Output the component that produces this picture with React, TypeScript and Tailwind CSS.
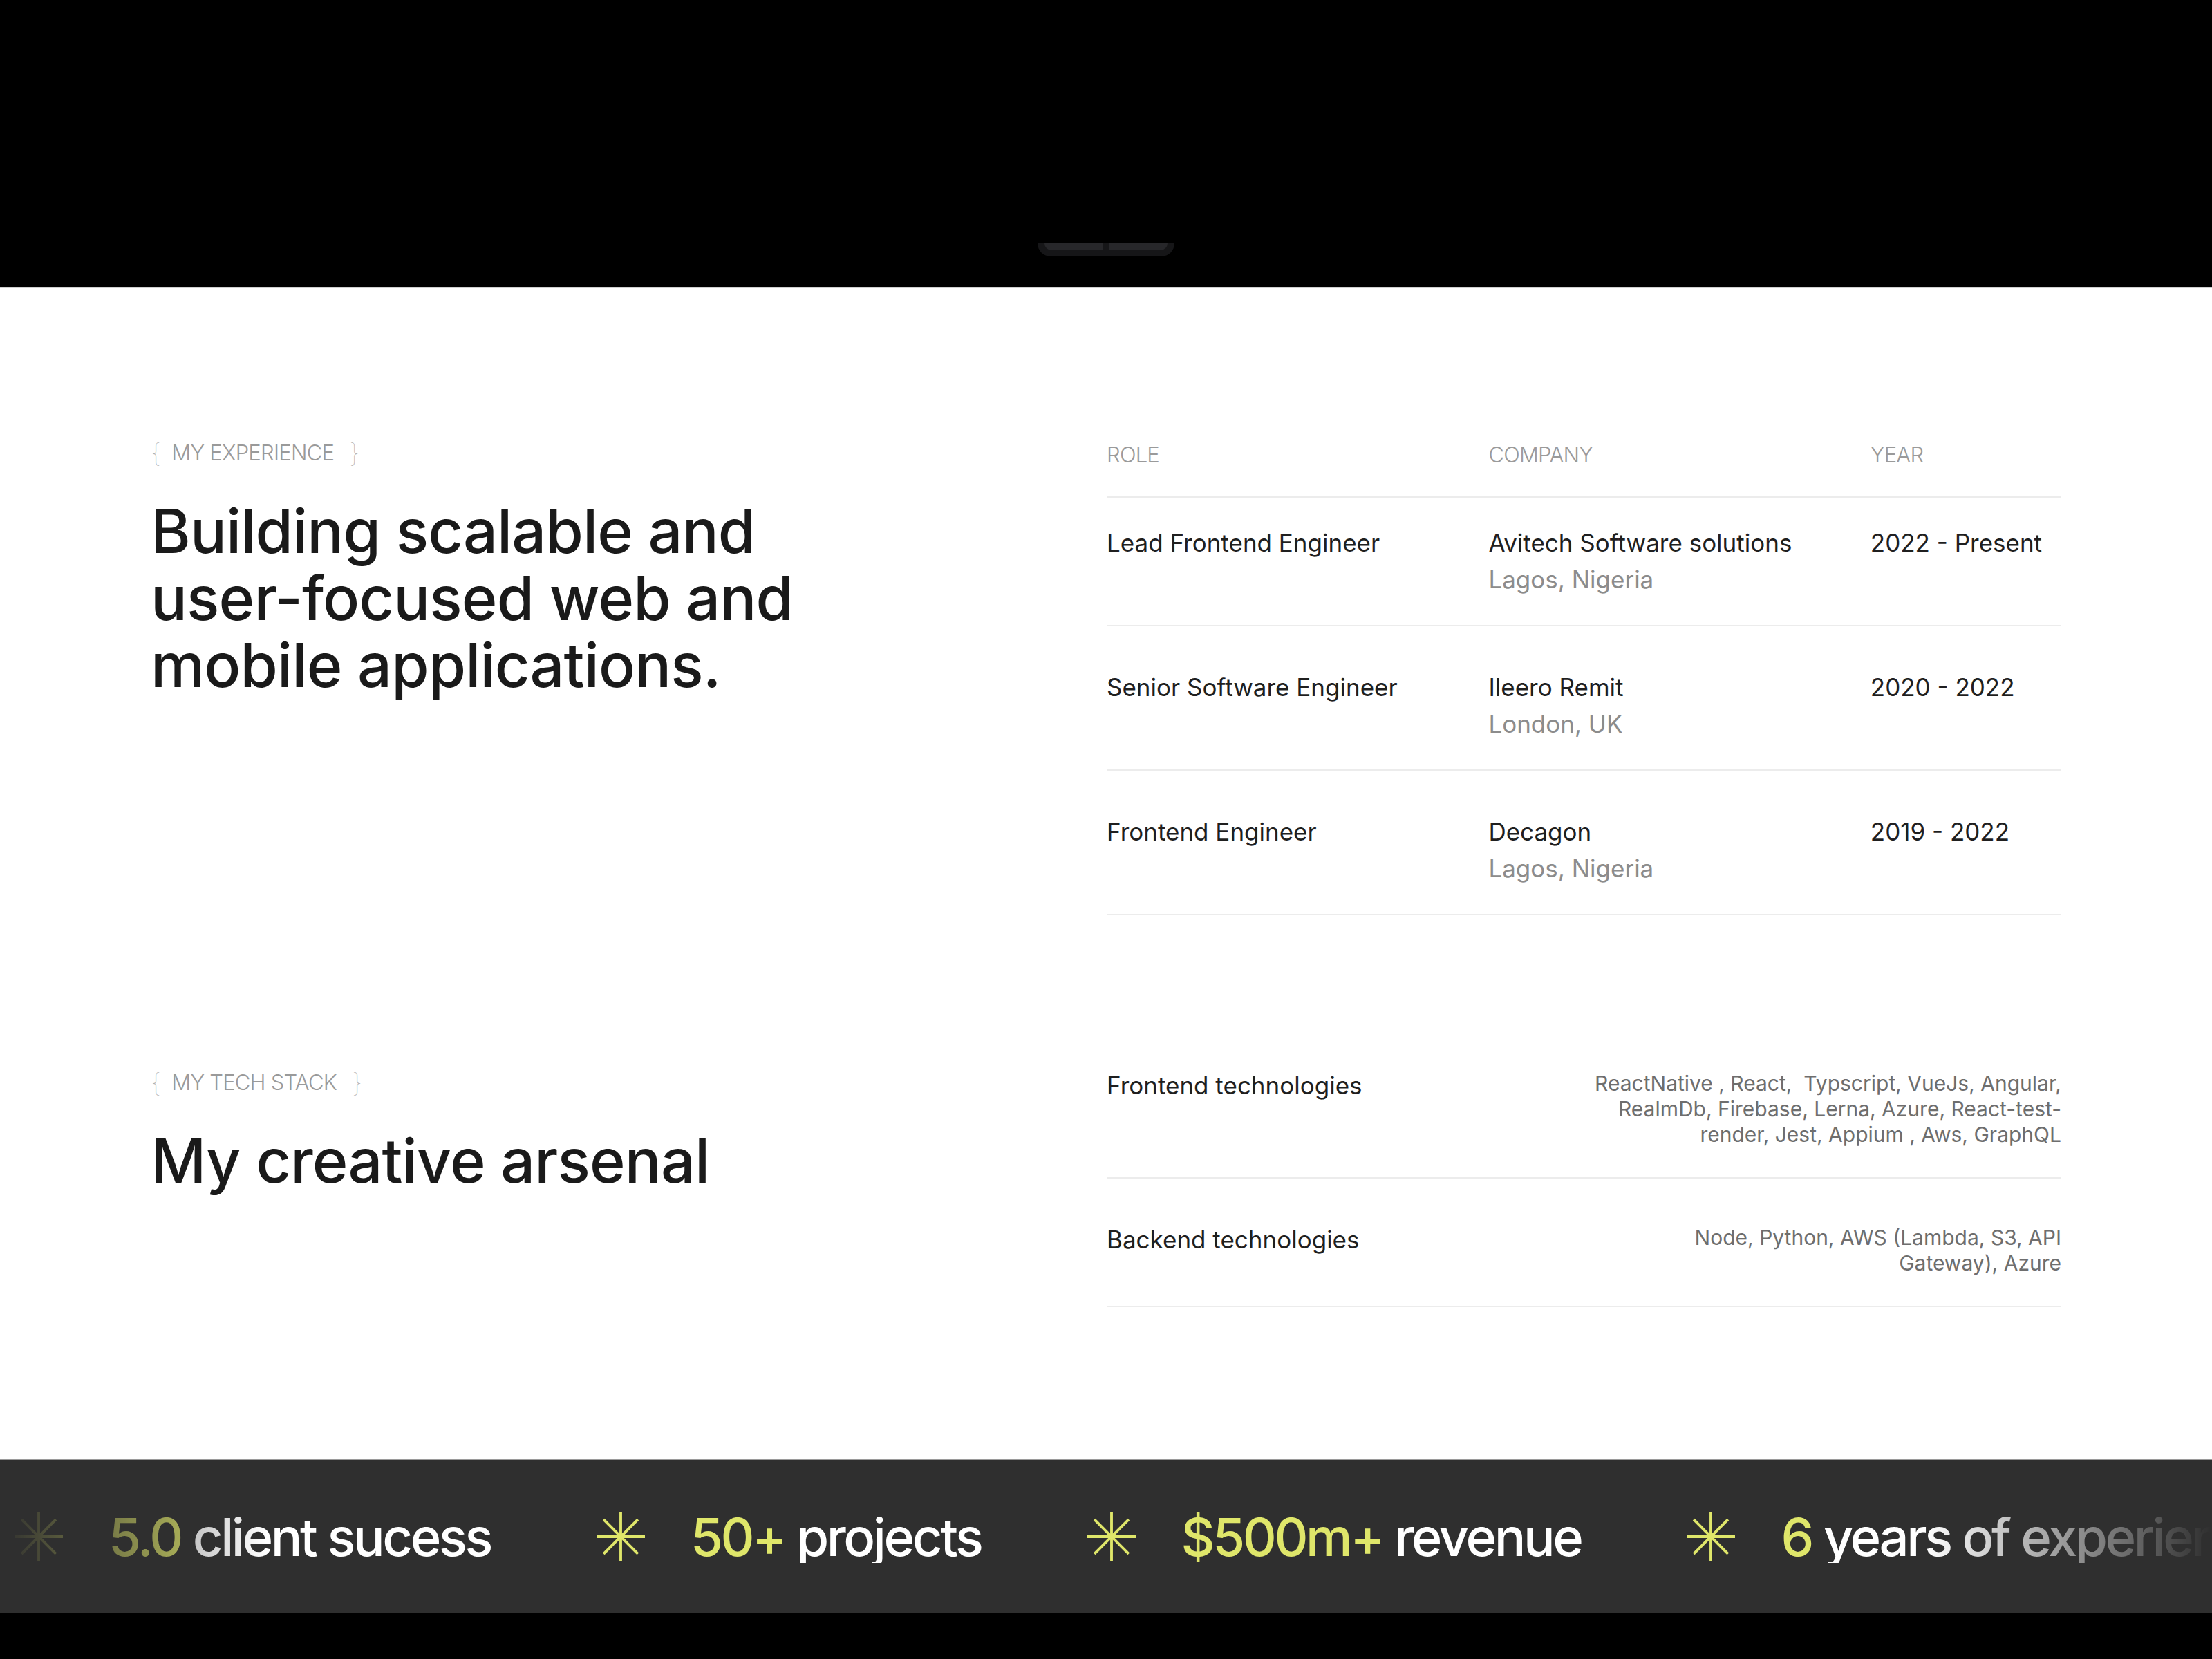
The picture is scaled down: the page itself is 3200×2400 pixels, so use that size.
import React from 'react';

const experience = [
  { role: 'Lead Frontend Engineer', company: 'Avitech Software solutions', location: 'Lagos, Nigeria', year: '2022 - Present' },
  { role: 'Senior Software Engineer', company: 'Ileero Remit', location: 'London, UK', year: '2020 - 2022' },
  { role: 'Frontend Engineer', company: 'Decagon', location: 'Lagos, Nigeria', year: '2019 - 2022' },
];

const stack = [
  {
    title: 'Frontend technologies',
    lines: [
      'ReactNative , React,  Typscript, VueJs, Angular,',
      'RealmDb, Firebase, Lerna, Azure, React-test-',
      'render, Jest, Appium , Aws, GraphQL',
    ],
  },
  {
    title: 'Backend technologies',
    lines: ['Node, Python, AWS (Lambda, S3, API', 'Gateway), Azure'],
  },
];

const stats = [
  { value: '5.0', label: 'client sucess' },
  { value: '50+', label: 'projects' },
  { value: '$500m+', label: 'revenue' },
  { value: '6', label: 'years of experience' },
  { value: '5.0', label: 'client sucess' },
];

function Spark() {
  return (
    <svg width="70" height="70" viewBox="0 0 72 72" fill="none" stroke="#dfe66a" strokeWidth="4" className="shrink-0">
      <line x1="36" y1="0" x2="36" y2="72" />
      <line x1="0" y1="36" x2="72" y2="36" />
      <line x1="10.5" y1="10.5" x2="61.5" y2="61.5" />
      <line x1="61.5" y1="10.5" x2="10.5" y2="61.5" />
    </svg>
  );
}

function SectionLabel({ children }: { children: React.ReactNode }) {
  return (
    <div className="flex items-center h-[40px] text-[31px] text-[#9a9a9a] font-light tracking-tight">
      <span className="text-[38px] font-thin text-[#b5b5b5] leading-none">{'{'}</span>
      <span className="ml-[16px]">{children}</span>
      <span className="ml-[22px] text-[38px] font-thin text-[#b5b5b5] leading-none">{'}'}</span>
    </div>
  );
}

export default function App() {
  return (
    <div className="w-[3200px] h-[2400px] flex flex-col bg-black font-['Inter','Noto_Sans',sans-serif]">
      {/* top band */}
      <div className="h-[415px] shrink-0 bg-black flex justify-center items-start pt-[352px]">
        <div className="w-[198px] h-[19px] rounded-b-[22px] bg-[#161618] flex justify-center gap-[8px] px-[10px]">
          <div className="flex-1 h-[10px] rounded-bl-[10px] bg-[#27272a]" />
          <div className="flex-1 h-[10px] rounded-br-[10px] bg-[#27272a]" />
        </div>
      </div>

      {/* white content */}
      <div className="flex-1 bg-white border-t border-[#cfcfcf] px-[218px] pt-[219px]">
        <div className="grid grid-cols-2">
          <div>
            <SectionLabel>MY EXPERIENCE</SectionLabel>
            <h2 className="mt-[45px] text-[88px] leading-[97px] font-medium tracking-[-0.01em] text-[#1a1a1a]">
              Building scalable and
              <br />
              user-focused web and
              <br />
              mobile applications.
            </h2>
          </div>

          <div className="pl-[1px]">
            <div className="grid grid-cols-[2fr_2fr_1fr] h-[40px] items-center text-[31px] font-light text-[#9a9a9a] tracking-tight">
              <span>ROLE</span>
              <span>COMPANY</span>
              <span>YEAR</span>
            </div>
            <div className="mt-[43px] border-t-2 border-[#ececec]">
              {experience.map((row, i) => (
                <div
                  key={row.role}
                  className={`grid grid-cols-[2fr_2fr_1fr] border-b-2 border-[#ececec] pb-[39px] text-[35px] leading-[53px] text-[#1f1f1f] ${i === 0 ? 'pt-[39px]' : 'pt-[62px]'}`}
                >
                  <span>{row.role}</span>
                  <div className="flex flex-col">
                    <span>{row.company}</span>
                    <span className="text-[#8c8c8c]">{row.location}</span>
                  </div>
                  <span>{row.year}</span>
                </div>
              ))}
            </div>
          </div>
        </div>

        <div className="grid grid-cols-2 mt-[222px]">
          <div>
            <SectionLabel>MY TECH STACK</SectionLabel>
            <h2 className="mt-[45px] text-[88px] leading-[97px] font-medium tracking-[-0.01em] text-[#1a1a1a]">
              My creative arsenal
            </h2>
          </div>

          <div className="pl-[1px]">
            {stack.map((s, i) => (
              <div
                key={s.title}
                className={`flex justify-between items-start border-b-2 border-[#ececec] pb-[43px] ${i === 0 ? 'pt-0' : 'pt-[64px]'}`}
              >
                <span className="text-[35px] leading-[48px] text-[#1f1f1f]">{s.title}</span>
                <div className="mt-[3px] flex flex-col items-end text-[30px] leading-[37px] text-[#6e6e6e]">
                  {s.lines.map((l) => (
                    <span key={l} className="whitespace-pre">{l}</span>
                  ))}
                </div>
              </div>
            ))}
          </div>
        </div>
      </div>

      {/* stats marquee */}
      <div className="h-[222px] shrink-0 bg-[#2f2f2f] border-t border-[#9a9a9a] flex items-center overflow-hidden">
        <div className="flex items-center gap-[153px] pl-[21px] whitespace-nowrap [mask-image:linear-gradient(to_right,transparent,black_12%,black_87%,transparent)] w-full">
          {stats.map((s, i) => (
            <div key={i} className="flex items-center gap-[66px] shrink-0">
              <Spark />
              <span className="text-[76px] font-medium tracking-[-0.045em] leading-none">
                <span className="text-[#dfe66a]">{s.value}</span>
                <span className="text-white"> {s.label}</span>
              </span>
            </div>
          ))}
        </div>
      </div>

      <div className="h-[67px] shrink-0 bg-black" />
    </div>
  );
}
